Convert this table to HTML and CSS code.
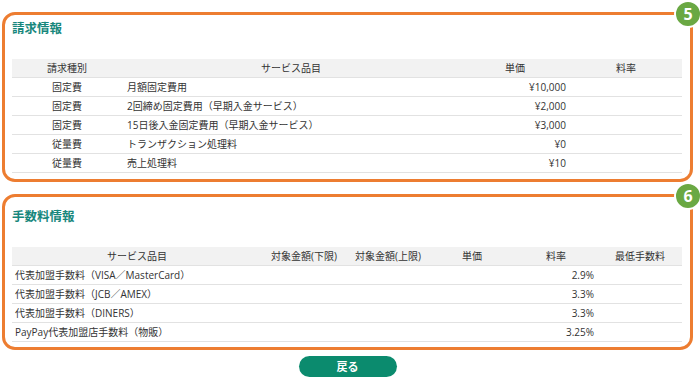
FILE: index.html
```html
<!DOCTYPE html>
<html lang="ja">
<head>
<meta charset="utf-8">
<link rel="stylesheet" href="styles.css">
</head>
<body>
<div class="page">
  <section class="box box-first">
    <h2 class="title">請求情報</h2>
    <table class="grid">
      <colgroup><col class="c110"><col class="c338"><col class="c110"><col></colgroup>
      <thead><tr><th>請求種別</th><th>サービス品目</th><th>単価</th><th>料率</th></tr></thead>
      <tbody>
        <tr><td class="ctr">固定費</td><td>月額固定費用</td><td class="num">¥10,000</td><td></td></tr>
        <tr><td class="ctr">固定費</td><td>2回締め固定費用（早期入金サービス）</td><td class="num">¥2,000</td><td></td></tr>
        <tr><td class="ctr">固定費</td><td>15日後入金固定費用（早期入金サービス）</td><td class="num">¥3,000</td><td></td></tr>
        <tr><td class="ctr">従量費</td><td>トランザクション処理料</td><td class="num">¥0</td><td></td></tr>
        <tr><td class="ctr">従量費</td><td>売上処理料</td><td class="num">¥10</td><td></td></tr>
      </tbody>
    </table>
    <span class="badge">5</span>
  </section>
  <section class="box box-second">
    <h2 class="title">手数料情報</h2>
    <table class="grid">
      <colgroup><col class="c250"><col class="c84"><col class="c84"><col class="c84"><col class="c84"><col></colgroup>
      <thead><tr><th>サービス品目</th><th>対象金額(下限)</th><th>対象金額(上限)</th><th>単価</th><th>料率</th><th>最低手数料</th></tr></thead>
      <tbody>
        <tr><td class="lft">代表加盟手数料（VISA／MasterCard）</td><td></td><td></td><td></td><td class="num">2.9%</td><td></td></tr>
        <tr><td class="lft">代表加盟手数料（JCB／AMEX）</td><td></td><td></td><td></td><td class="num">3.3%</td><td></td></tr>
        <tr><td class="lft">代表加盟手数料（DINERS）</td><td></td><td></td><td></td><td class="num">3.3%</td><td></td></tr>
        <tr><td class="lft">PayPay代表加盟店手数料（物販）</td><td></td><td></td><td></td><td class="num">3.25%</td><td></td></tr>
      </tbody>
    </table>
    <span class="badge">6</span>
  </section>
  <div class="actions"><button class="back">戻る</button></div>
</div>
</body>
</html>
```

FILE: styles.css
```css
* { box-sizing: border-box; }
html, body { margin: 0; padding: 0; background: #fff; }
body {
  font-family: "Open Sans", "Noto Sans CJK JP", sans-serif;
  font-size: 10px;
  color: #333;
}
.page {
  width: 691px;
  margin: 12px 0 0 2px;
}
.box {
  position: relative;
  border: 3px solid #ed7d31;
  border-radius: 13px;
  padding: 4px 8px 6px 7px;
}
.box-second {
  margin-top: 12px;
  padding-top: 10px;
  padding-bottom: 5px;
}
.title {
  margin: 0 0 22px 0;
  font-family: "Noto Sans CJK JP", sans-serif;
  font-size: 12.5px;
  font-weight: bold;
  line-height: 18px;
  color: #17877c;
}
.grid {
  width: 100%;
  border-collapse: collapse;
  table-layout: fixed;
}
.c110 { width: 110px; }
.c338 { width: 338px; }
.c250 { width: 250px; }
.c84 { width: 84px; }
.grid th {
  background: #f2f2f2;
  font-weight: normal;
  height: 18px;
  padding: 0;
  text-align: center;
  border-bottom: 1px solid #e2e2e2;
  line-height: 18px;
}
.grid td {
  height: 18px;
  padding: 0 5px;
  line-height: 18px;
  border-bottom: 1px solid #e2e2e2;
  white-space: nowrap;
}
.grid td.ctr { text-align: center; }
.grid td.lft { padding-left: 3px; }
.grid td.num { text-align: right; padding-right: 4px; }
.badge {
  position: absolute;
  top: -15px;
  right: -12px;
  width: 28px;
  height: 28px;
  border-radius: 50%;
  background: #6aa843;
  border: 2px solid #fff;
  color: #fff;
  font-family: "Open Sans", sans-serif;
  font-weight: bold;
  font-size: 16px;
  line-height: 24px;
  text-align: center;
}
.actions {
  display: flex;
  justify-content: center;
  margin-top: 6px;
}
.back {
  width: 98px;
  height: 21px;
  border: none;
  border-radius: 11px;
  background: #0b8b6e;
  color: #fff;
  font-family: "Noto Sans CJK JP", sans-serif;
  font-size: 11px;
  font-weight: bold;
  padding: 0;
  line-height: 21px;
}
```
